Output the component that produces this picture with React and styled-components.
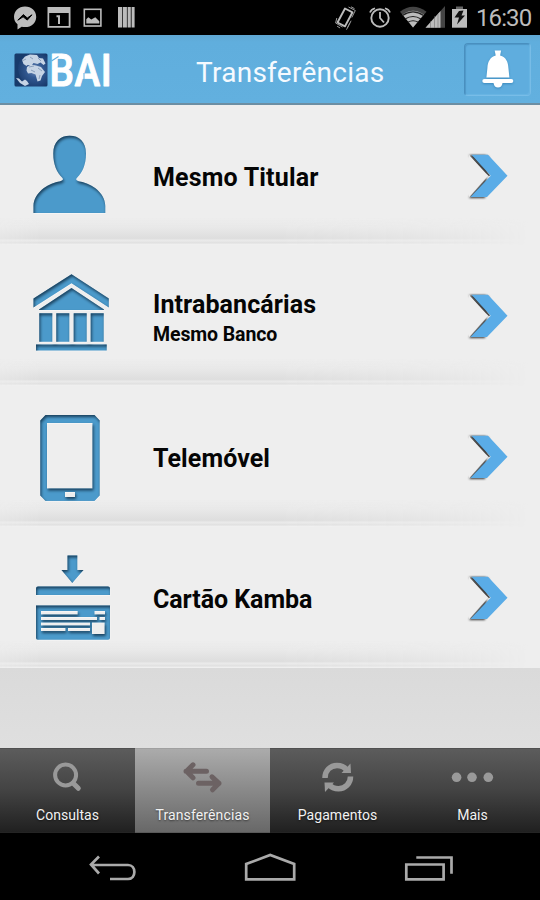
import React from 'react';
import styled, { createGlobalStyle } from 'styled-components';

const GlobalStyle = createGlobalStyle`
  * { box-sizing: border-box; }
  body { margin: 0; background: #000; font-family: Roboto, "Liberation Sans", sans-serif; }
  svg { display: block; flex: none; }
`;

const Screen = styled.div`
  width: 540px;
  height: 900px;
  display: flex;
  flex-direction: column;
  overflow: hidden;
  background: #000;
`;

const StatusBar = styled.div`
  height: 35px;
  flex: none;
  display: flex;
  justify-content: space-between;
  background: #000;
`;

const StatusRight = styled.div`
  display: flex;
`;

const Clock = styled.div`
  width: 64px;
  line-height: 37px;
  font-size: 24px;
  letter-spacing: -0.9px;
  color: #bcbcbc;
  white-space: nowrap;
`;

const Header = styled.header`
  height: 70px;
  flex: none;
  display: grid;
  grid-template-columns: 120px 1fr 76px;
  align-items: start;
  background: linear-gradient(#5fa7d3 0, #60aedd 7px, #62b0df 100%);
  border-bottom: 2px solid #6c8ea3;
`;

const Title = styled.h1`
  margin: 0;
  padding-left: 76px;
  font-weight: 400;
  font-size: 28px;
  line-height: 75px;
  letter-spacing: 0.27px;
  color: #f5faff;
`;

const BellButton = styled.button`
  width: 67px;
  height: 53px;
  margin-top: 8px;
  padding: 0;
  border: 1px solid #498fbf;
  border-right-color: #78bce6;
  border-bottom-color: #78bde8;
  border-radius: 4px;
  background: #5fadde;
  box-shadow: inset 1px 1px 1px #4f98c8, inset -1px -1px 1px #6ab5e3;
`;

const List = styled.main`
  height: 563px;
  flex: none;
  display: grid;
  grid-template-rows: 140px 141px 141px 141px;
`;

const Row = styled.div`
  display: grid;
  grid-template-columns: 153px 1fr 80px;
  position: relative;
  background: #eeeeee;
  overflow: hidden;
  &::after {
    content: '';
    position: absolute;
    left: 0;
    right: 0;
    bottom: 0;
    height: 27px;
    background: linear-gradient(#eee0 0, #e9e9e9 9px, #dedede 20px, #dfdfdf 21px, #ebebeb 22px, #e5e5e5 24px, #dedede 25px, #efefef 26px);
    mask-image: linear-gradient(90deg, #0008 0, #000 40px, #000 280px, #0007 450px, transparent 528px);
  }
`;

const RowText = styled.div`
  height: ${(p) => (p.$double ? '147px' : '144px')};
  display: flex;
  flex-direction: column;
  justify-content: center;
  color: #050505;
  font-weight: 700;
  white-space: nowrap;
`;

const RowTitle = styled.div`
  font-size: 25px;
  line-height: 31px;
  letter-spacing: ${(p) => p.$spacing || '0.1px'};
`;

const RowSubtitle = styled.div`
  font-size: 19.5px;
  line-height: 29px;
  letter-spacing: -0.1px;
`;

const Filler = styled.div`
  flex: 1;
  background: linear-gradient(#dadada, #dfdfdf);
`;

const TabBar = styled.nav`
  height: 85px;
  flex: none;
  display: grid;
  grid-template-columns: repeat(4, 1fr);
`;

const Tab = styled.div`
  display: flex;
  flex-direction: column;
  align-items: center;
  background: ${(p) =>
    p.$active ? 'linear-gradient(#ababab, #898989 50%, #686868)' : 'linear-gradient(#5c5c5c, #434343 50%, #202020)'};
  border-top: 1px solid ${(p) => (p.$active ? '#a0a0a0' : '#505050')};
  border-bottom: 1px solid ${(p) => (p.$active ? '#595959' : '#242424')};
`;

const TabLabel = styled.div`
  font-size: 14px;
  line-height: 19px;
  letter-spacing: ${(p) => p.$spacing || '0.05px'};
  color: #f2f2f2;
  text-shadow: 0 1px 2px #0008;
`;

const NavBar = styled.div`
  height: 67px;
  flex: none;
  background: #000;
`;

function LeftStatusIcons() {
  return (
    <svg width="180" height="35" fill="#bcbcbc">
      <path d="M25 6.500c-6.400 0-11 4.500-11 10.300 0 3.300 1.200 5.500 3.500 7.400V29.600l4.200-2.900c1 .3 2.100.4 3.300.4 6.600 0 11.200-4.500 11.200-10.200S31.600 6.500 25 6.500Z" />
      <path d="m17.800 20.200 5.500-5.600 4 3.400 4.700-3.200-4.700 5.300-4.200-3.300Z" fill="#000" stroke="#000" />
      <path fillRule="evenodd" d="M47.500 7h23v20.700h-23ZM49.200 13v13h19.500V13Z" />
      <path d="M56.500 16.200h2.500V24" fill="none" stroke="#bcbcbc" strokeWidth="2" />
      <rect x="84.300" y="9.300" width="16.600" height="16.700" fill="none" stroke="#bcbcbc" strokeWidth="1.600" />
      <path d="M86.300 23.500v-4.300l2-2 3 2.300 4-2.300 4 4v2.300Z" />
      <path d="M118 7h4.200v20.500H118Zm4.900 0h4v20.500h-4Zm4.700 0h3.200v20.500h-3.200Zm4 0h3v20.500h-3Z" />
    </svg>
  );
}

function RightStatusIcons() {
  return (
    <svg width="144" height="35" viewBox="332 0 144 35" fill="none">
      <path d="m345 8.500 7.500 3.800-7.500 14-7.500-3.800Z" stroke="#bcbcbc" strokeWidth="1.900" strokeLinejoin="round" />
      <path
        d="m348.500 7 6.800 3.500-3.500 7M351 6.800l3.500 1.800M336.800 18l-1.200 5 7 4m-5.500-.8 3 1.800m7.500-.3 3.500-7m-4.600 9 3.500-7"
        stroke="#999"
        strokeWidth="1"
      />
      <g stroke="#bcbcbc">
        <circle cx="380" cy="18" r="8.700" strokeWidth="1.900" />
        <path d="M380 12v6l4 4.500" strokeWidth="1.800" />
        <path d="M370 12.500q1-3.200 5-4.300m15 4.300q-1-3.200-5-4.300" strokeWidth="1.700" />
      </g>
      <path d="M413 27.500 400 11.700q13-10 26.500 0Z" fill="#444" />
      <path d="M413 27.500 402.500 14.600q10.500-7.700 21.300 0Z" fill="#bcbcbc" />
      <path d="M402.500 15.500q10.500-7.300 21 0M405 19q8-5 16 0m-13.200 3.200q5.200-3 10.500 0" stroke="#222" strokeWidth="1.100" />
      <path d="M425.500 27.700 445 6v21.700Z" fill="#444" />
      <path d="M425.500 27.700 440.500 11v16.700Z" fill="#bcbcbc" />
      <path d="M430.500 21v7m4-12v12m3.500-14v14" stroke="#666" strokeWidth=".5" />
      <path d="M452 9h15v18.700h-15Z" fill="#bcbcbc" />
      <path d="M456 6.500h7V9h-7Z" fill="#666" />
      <path d="m459 11 4.500-.5-2 5h3.500l-8 9 2-7h-4.500Z" fill="#111" />
    </svg>
  );
}

function Logo() {
  return (
    <svg width="120" height="68" viewBox="0 35 120 68">
      <defs>
        <radialGradient id="sea" cx=".62" cy=".5" r=".65">
          <stop offset="0" stopColor="#7890bb" />
          <stop offset=".35" stopColor="#345b94" />
          <stop offset="1" stopColor="#123363" />
        </radialGradient>
      </defs>
      <rect x="14.500" y="53.500" width="33" height="33" rx="1.500" fill="url(#sea)" />
      <path d="M15 54h12q-10 5-9 16 1 8 8 16H15Z" fill="#183b6b" />
      <g fill="#c6d4e5">
        <path d="m22 60 3-3.500 5-2 7 .5 2 3 4 .5 2.500 5-2 1.500-3-2.500-3 1.500-4-1-2 2.500-4-.5-1 1-3-2Z" />
        <path d="m27 67 4-2.500 5 1 5 1.500 4 5-3 4-1.500 4.500-3 1-2-7-4-1.500-3.500.5-1.500-3Z" />
        <path d="m16 78 3 .5 3 3 3-2 2 1.500 2 3-4 2-5-3Z" />
      </g>
      <path d="m22 61 4-2m4-2 3 2m5-1 3 3m-12 6 5-1m4 2 4 3m-11-1 4 2m5 3-1 4" stroke="#7189aa" strokeWidth=".7" fill="none" />
      <text
        transform="translate(49.500 86) scale(.88 1)"
        fill="#fff"
        stroke="#fff"
        strokeWidth="1"
        strokeLinejoin="round"
        fontFamily="Roboto"
        fontWeight="500"
        fontSize="44"
        letterSpacing=".6"
      >
        BAI
      </text>
      <path d="M51.500 61 58.500 56.500" stroke="#61afdf" strokeWidth="1.200" />
      <path d="M84 73v9" stroke="#61afdf" strokeWidth="1" />
    </svg>
  );
}

function Bell() {
  return (
    <svg width="65" height="51" viewBox="465 44 65 51" fill="#fff">
      <g filter="drop-shadow(0 1px 1px #3b89bd)">
        <path d="M494.700 50.500h6.400l-1 5c6 1.700 8 6.500 8.300 12.500l1 9.500h-23l1-9.500c.3-6 2.500-10.800 8.300-12.500Z" />
        <rect x="482.300" y="79" width="31" height="4" rx="2" />
        <path d="M493.500 83h9c-.5 3-2 4.500-4.500 4.500s-4-1.500-4.500-4.500Z" />
      </g>
    </svg>
  );
}

function InsetFilter() {
  return (
    <svg width="0" height="0">
      <filter id="inset" x="-10%" y="-10%" width="120%" height="120%" colorInterpolationFilters="sRGB">
        <feComponentTransfer in="SourceAlpha" result="inverse">
          <feFuncA type="linear" slope="-1" intercept="1" />
        </feComponentTransfer>
        <feGaussianBlur in="inverse" stdDeviation="1.500" result="blurred" />
        <feOffset in="blurred" dx="0.600" dy="1.900" result="moved" />
        <feComposite in="moved" in2="SourceAlpha" operator="in" result="shade" />
        <feComponentTransfer in="shade" result="soft">
          <feFuncR type="linear" slope="0" intercept="0.050" />
          <feFuncG type="linear" slope="0" intercept="0.160" />
          <feFuncB type="linear" slope="0" intercept="0.250" />
          <feFuncA type="linear" slope="0.800" />
        </feComponentTransfer>
        <feMerge>
          <feMergeNode in="SourceGraphic" />
          <feMergeNode in="soft" />
        </feMerge>
      </filter>
    </svg>
  );
}

const ICON_PATHS = {
  person:
    'M33.500 108v-7C34 88 47 79 58 76.800c5-1 6-2.300 4-4.300C57 67.500 53.300 60 53.300 48.500c0-12 7-17.800 16.400-17.800S86 36.500 86 48.500c0 11.500-3.700 19-8.700 24-2 2-1.300 3.300 3.700 4.300 11 2.200 24.300 11.200 24.300 24.200v7Z',
  bank:
    'M33.500 53.500 71.500 29.300l37.300 24.200v9L71.500 38.300l-38 24.200ZM71.500 43 104 64.500V65H39v-.5ZM39.300 68.300h13v28.400h-13Zm17 0h13v28.400h-13Zm17.400 0h13v28.400h-13Zm17 0h13v28.400h-13ZM36 99.500h70.700v6H36Z',
  phone:
    'M45.500 29h49l5.200 5.500v75l-5.200 5.500h-49l-5.200-5.500v-75ZM47 37v65.500h45.500V37Zm18 69v5h10v-5Z',
  card:
    'M67.500 28.500h9.800V43H83.500L72.300 56 61.500 43h6ZM36 61.500q0-2 2-2h70q2 0 2 2V68H36ZM36 78.500h74V111q0 1.700-2 1.700H38q-2 0-2-1.700ZM41 84v3.500h36.700V84Zm53.500 0v3.500H105V84ZM41 90v3h56v-3Zm58.500 0v3h5.500v-3ZM41 95.500v3h49v-3Zm0 5.500v3h24.500v-3Zm27 0v3h22v-3Zm24-5.500V107h12.700V95.500Z',
};

function MenuIcon({ name }) {
  return (
    <svg width="153" height="140">
      <path d={ICON_PATHS[name]} fill="#f8f8f8" fillRule="evenodd" transform="translate(.300 .700)" />
      <path d={ICON_PATHS[name]} fill="#4b9acb" fillRule="evenodd" filter="url(#inset)" />
    </svg>
  );
}

function Chevron() {
  return (
    <svg width="80" height="140" viewBox="460 -.7 80 140">
      <path d="M469 49.300h16l4 2-4 41H470l-1-.5L488 70Z" fill="#333" filter="blur(.8px)" />
      <path d="M471.500 49H488l19.500 21L487 91.200h-16.500L490.700 70Z" fill="#5aace7" />
      <path d="M470 50.500 489.500 70" stroke="#444" strokeWidth="1.500" />
      <path d="M469 49 488 70 469 91.500Z" fill="#eee" />
    </svg>
  );
}

const ROWS = [
  { icon: 'person', title: 'Mesmo Titular', spacing: '0.18px' },
  { icon: 'bank', title: 'Intrabancárias', subtitle: 'Mesmo Banco' },
  { icon: 'phone', title: 'Telemóvel' },
  { icon: 'card', title: 'Cartão Kamba', spacing: '-0.06px' },
];

const TAB_ICONS = {
  search: (
    <g fill="none" stroke="#999">
      <circle cx="65.600" cy="26" r="10.500" strokeWidth="4" />
      <path d="m73 34 5.300 5.300" strokeWidth="5" strokeLinecap="round" />
    </g>
  ),
  transfer: (
    <g fill="none" stroke="#6c6263" strokeWidth="5" strokeLinecap="round" strokeLinejoin="round">
      <path d="M71.500 22.300H51m7-6.500-6.500 6.500 6.500 6.500" />
      <path d="M63.500 34.300H84m-7-6.500 7 6.500-6.500 6.500" />
    </g>
  ),
  sync: (
    <g>
      <path d="M55 29c0-7.500 5.300-12.500 12-12.500 3.800 0 7 1.200 9.300 4" fill="none" stroke="#999" strokeWidth="5.500" />
      <path d="m80.500 14.500.5 9.500h-9.500Z" fill="#999" />
      <path d="M80.500 27.500c0 7.200-5.300 12.200-12 12.200-3.800 0-7-1.200-9.300-4" fill="none" stroke="#999" strokeWidth="5.500" />
      <path d="m55 43-.5-9.500h9.500Z" fill="#999" />
    </g>
  ),
  more: (
    <g fill="#999">
      <circle cx="51.600" cy="28.300" r="4.800" />
      <circle cx="67" cy="28.300" r="4.800" />
      <circle cx="83.300" cy="28.300" r="4.800" />
    </g>
  ),
};

const TABS = [
  { icon: 'search', label: 'Consultas' },
  { icon: 'transfer', label: 'Transferências', active: true, spacing: '0.12px' },
  { icon: 'sync', label: 'Pagamentos' },
  { icon: 'more', label: 'Mais' },
];

export default function App() {
  return (
    <Screen>
      <GlobalStyle />
      <StatusBar>
        <LeftStatusIcons />
        <StatusRight>
          <RightStatusIcons />
          <Clock>16:30</Clock>
        </StatusRight>
      </StatusBar>
      <Header>
        <Logo />
        <Title>Transferências</Title>
        <BellButton aria-label="Notificações">
          <Bell />
        </BellButton>
      </Header>
      <List>
        {ROWS.map((row) => (
          <Row key={row.icon}>
            <MenuIcon name={row.icon} />
            <RowText $double={Boolean(row.subtitle)}>
              <RowTitle $spacing={row.spacing}>{row.title}</RowTitle>
              {row.subtitle && <RowSubtitle>{row.subtitle}</RowSubtitle>}
            </RowText>
            <Chevron />
          </Row>
        ))}
      </List>
      <Filler />
      <TabBar>
        {TABS.map((tab) => (
          <Tab key={tab.icon} $active={tab.active}>
            <svg width="135" height="57">{TAB_ICONS[tab.icon]}</svg>
            <TabLabel $spacing={tab.spacing}>{tab.label}</TabLabel>
          </Tab>
        ))}
      </TabBar>
      <NavBar>
        <svg width="540" height="67" viewBox="0 833 540 67" fill="none" stroke="#aaa" strokeWidth="2.700">
          <path d="m99 856.500-8 8 8 9M91 865h37c8.500 0 8.500 14 0 14h-18" />
          <path d="M246.200 879.300V864l24-9 24 9v15.300Z" />
          <path d="M406.300 864.500h37.300v14.800h-37.300ZM416.300 857.500h35.200V873.700" />
        </svg>
        <InsetFilter />
      </NavBar>
    </Screen>
  );
}
